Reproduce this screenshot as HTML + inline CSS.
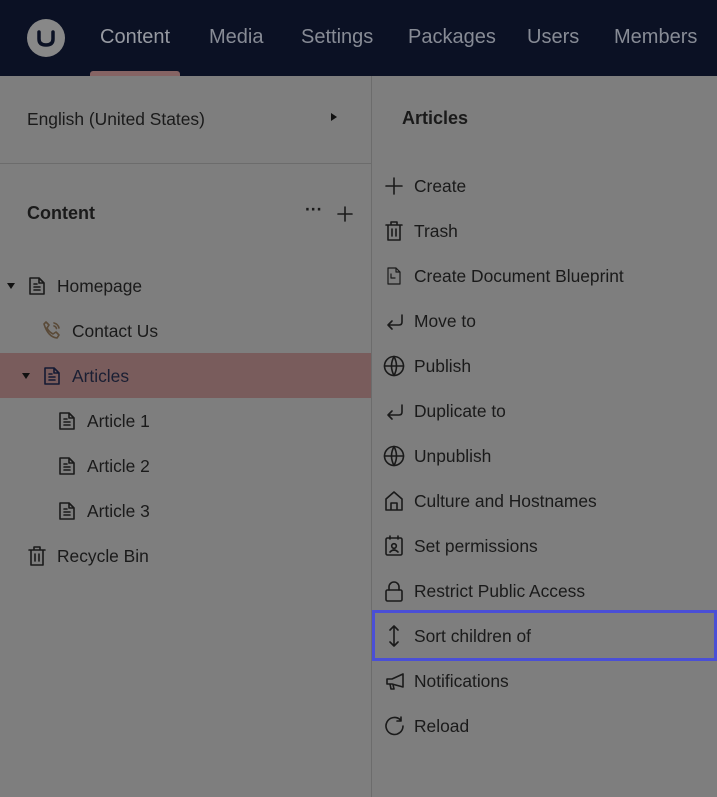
<!DOCTYPE html>
<html><head><meta charset="utf-8"><style>
*{margin:0;padding:0;box-sizing:border-box}
body{width:717px;height:797px;overflow:hidden;background:#7e7e7e;font-family:"Liberation Sans",sans-serif;color:#1a1a1a;position:relative}
.hdr{position:absolute;left:0;top:0;width:717px;height:76px;background:#0b1124}
.nav{position:absolute;top:26px;font-size:20px;color:#878b95}
.ul{position:absolute;left:90px;top:71px;width:90px;height:5px;background:#866464;border-radius:3px 3px 0 0}
.t{position:absolute;font-size:17.4px;white-space:nowrap}
svg{position:absolute;fill:none;stroke:#1a1a1a;stroke-width:1.6;stroke-linecap:round;stroke-linejoin:round}
</style></head><body>
<div class="hdr"></div>
<svg style="left:27px;top:19px" width="38" height="38" viewBox="0 0 38 38"><circle cx="19" cy="19" r="19" fill="#888" stroke="none"/><path d="M12 13v7q0 6 7 6t7-6v-7" stroke="#0b1124" stroke-width="3.5"/></svg>
<div class="nav" style="left:100px;color:#979aa2">Content</div>
<div class="nav" style="left:209px">Media</div>
<div class="nav" style="left:301px">Settings</div>
<div class="nav" style="left:408px">Packages</div>
<div class="nav" style="left:527px">Users</div>
<div class="nav" style="left:614px">Members</div>
<div class="ul"></div>
<div style="position:absolute;left:371px;top:76px;width:1px;height:721px;background:#6c6c6c"></div>
<div style="position:absolute;left:0;top:163px;width:371px;height:1px;background:#6c6c6c"></div>
<div class="t" style="left:27px;top:109px">English (United States)</div>
<div style="position:absolute;left:331px;top:113px;border-left:6px solid #111;border-top:4px solid transparent;border-bottom:4px solid transparent"></div>
<div class="t" style="left:27px;top:203px;font-weight:bold;font-size:18px">Content</div>
<div class="t" style="left:305px;top:199px;font-weight:bold">···</div>
<svg style="left:337px;top:206px" width="16" height="16"><path d="M8 1v14M1 8h14"/></svg>
<div style="position:absolute;left:0;top:353px;width:371px;height:45px;background:#795c5c"></div>
<div style="position:absolute;left:7px;top:283px;border-top:6px solid #111;border-left:4px solid transparent;border-right:4px solid transparent"></div>
<div style="position:absolute;left:22px;top:373px;border-top:6px solid #111;border-left:4px solid transparent;border-right:4px solid transparent"></div>
<svg style="left:28px;top:276px" width="18" height="20" viewBox="0 0 18 20"><path d="M2 2h9l5 5v11H2zM11 2v5h5M6 11h6M6 14h6M6 8h3"/></svg>
<div class="t" style="left:57px;top:276px">Homepage</div>
<svg style="left:42px;top:320px" width="20" height="20" viewBox="0 0 20 20"><path d="M4 2l3 3-2 3q2 4 6 6l3-2 3 3-2 3Q6 17 2 4z" stroke="#5a4a38"/><path d="M12 3q4 1 5 5M12 6q2 .5 2.5 2.5" stroke="#5a4a38"/></svg>
<div class="t" style="left:72px;top:321px">Contact Us</div>
<svg style="left:43px;top:366px" width="18" height="20" viewBox="0 0 18 20"><path d="M2 2h9l5 5v11H2zM11 2v5h5M6 11h6M6 14h6M6 8h3" stroke="#141a33"/></svg>
<div class="t" style="left:72px;top:366px;color:#1a1f33">Articles</div>
<svg style="left:58px;top:411px" width="18" height="20" viewBox="0 0 18 20"><path d="M2 2h9l5 5v11H2zM11 2v5h5M6 11h6M6 14h6M6 8h3"/></svg>
<div class="t" style="left:87px;top:411px">Article 1</div>
<svg style="left:58px;top:456px" width="18" height="20" viewBox="0 0 18 20"><path d="M2 2h9l5 5v11H2zM11 2v5h5M6 11h6M6 14h6M6 8h3"/></svg>
<div class="t" style="left:87px;top:456px">Article 2</div>
<svg style="left:58px;top:501px" width="18" height="20" viewBox="0 0 18 20"><path d="M2 2h9l5 5v11H2zM11 2v5h5M6 11h6M6 14h6M6 8h3"/></svg>
<div class="t" style="left:87px;top:501px">Article 3</div>
<svg style="left:27px;top:545px" width="20" height="22" viewBox="0 0 20 22"><path d="M2 5h16M7 5V2h6v3M4 5v15h12V5M8 9v7M12 9v7"/></svg>
<div class="t" style="left:57px;top:546px">Recycle Bin</div>
<div class="t" style="left:402px;top:108px;font-weight:bold;font-size:18px">Articles</div>
<svg style="left:385px;top:177px" width="18" height="18"><path d="M9 1v16M1 9h16"/></svg>
<div class="t" style="left:414px;top:176px">Create</div>
<svg style="left:384px;top:220px" width="20" height="22" viewBox="0 0 20 22"><path d="M2 5h16M7 5V2h6v3M4 5v15h12V5M8 9v7M12 9v7"/></svg>
<div class="t" style="left:414px;top:221px">Trash</div>
<svg style="left:386px;top:266px" width="16" height="20" viewBox="0 0 16 20"><path d="M2 2h8l4 4v12H2zM10 2v4h4" stroke-width="1.2"/><path d="M5 8v4h4" stroke-width="1.2"/></svg>
<div class="t" style="left:414px;top:266px">Create Document Blueprint</div>
<svg style="left:385px;top:312px" width="20" height="20" viewBox="0 0 20 20"><path d="M17 3v7q0 3-3 3H3M7 9l-4 4 4 4"/></svg>
<div class="t" style="left:414px;top:311px">Move to</div>
<svg style="left:383px;top:355px" width="22" height="22" viewBox="0 0 22 22"><circle cx="11" cy="11" r="9.5"/><path d="M1.5 11h19M11 1.5q-5 9.5 0 19M11 1.5q5 9.5 0 19"/></svg>
<div class="t" style="left:414px;top:356px">Publish</div>
<svg style="left:385px;top:402px" width="20" height="20" viewBox="0 0 20 20"><path d="M17 3v7q0 3-3 3H3M7 9l-4 4 4 4"/></svg>
<div class="t" style="left:414px;top:401px">Duplicate to</div>
<svg style="left:383px;top:445px" width="22" height="22" viewBox="0 0 22 22"><circle cx="11" cy="11" r="9.5"/><path d="M1.5 11h19M11 1.5q-5 9.5 0 19M11 1.5q5 9.5 0 19"/></svg>
<div class="t" style="left:414px;top:446px">Unpublish</div>
<svg style="left:384px;top:490px" width="20" height="22" viewBox="0 0 20 22"><path d="M2 9l8-7 8 7v11H2zM7 20v-7h6v7"/></svg>
<div class="t" style="left:414px;top:491px">Culture and Hostnames</div>
<svg style="left:384px;top:535px" width="20" height="22" viewBox="0 0 20 22"><rect x="2" y="3" width="16" height="17" rx="1.5"/><path d="M6 1v3M14 1v3M6 17q4-4 8 0"/><circle cx="10" cy="11" r="2.3"/></svg>
<div class="t" style="left:414px;top:536px">Set permissions</div>
<svg style="left:384px;top:580px" width="20" height="22" viewBox="0 0 20 22"><rect x="2" y="10" width="16" height="11" rx="1.5"/><path d="M5 10V7a5 5 0 0110 0v3"/></svg>
<div class="t" style="left:414px;top:581px">Restrict Public Access</div>
<div style="position:absolute;left:372px;top:610px;width:345px;height:51px;border:3px solid #4a4fd6"></div>
<svg style="left:386px;top:624px" width="16" height="24" viewBox="0 0 16 24"><path d="M8 2v20M4 6l4-4 4 4M4 18l4 4 4-4"/></svg>
<div class="t" style="left:414px;top:626px">Sort children of</div>
<svg style="left:384px;top:671px" width="22" height="20" viewBox="0 0 22 20"><path d="M19 3v13L8 13H3V8h5zM6 13l1 5h3l-1-4.5"/></svg>
<div class="t" style="left:414px;top:671px">Notifications</div>
<svg style="left:384px;top:715px" width="22" height="22" viewBox="0 0 22 22"><path d="M19 11a8.5 8.5 0 11-3-6.5M17 2v4h-4"/></svg>
<div class="t" style="left:414px;top:716px">Reload</div>
</body></html>
